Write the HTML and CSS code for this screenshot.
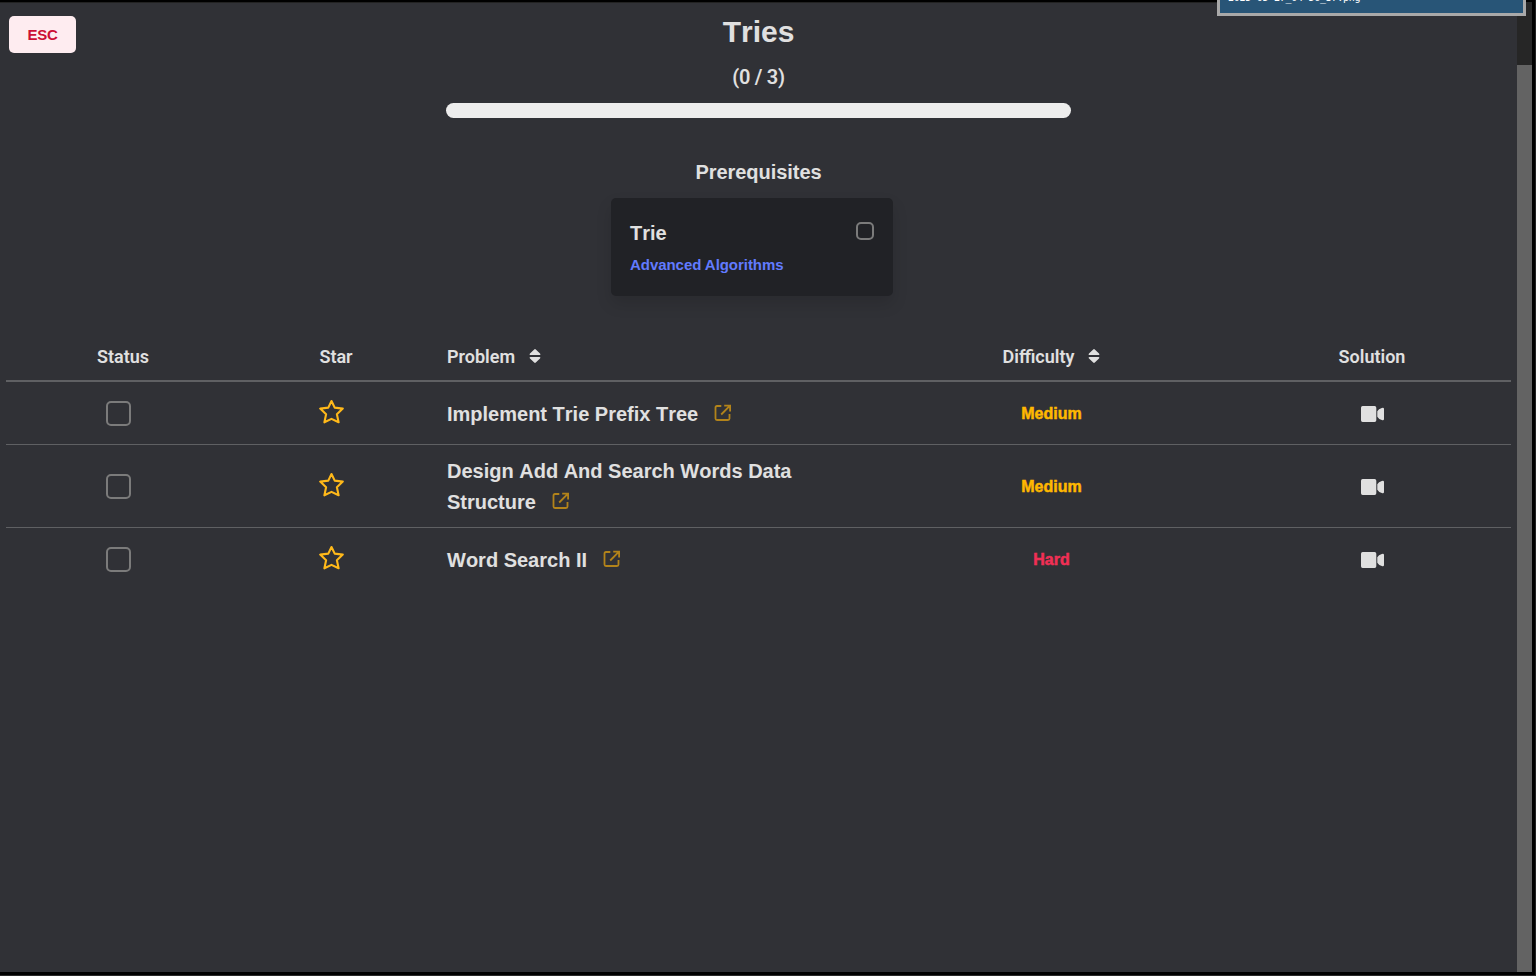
FILE: index.html
```html
<!DOCTYPE html>
<html lang="en">
<head>
<meta charset="utf-8">
<title>Tries</title>
<link rel="stylesheet" href="styles.css">
</head>
<body>
<svg class="defs" width="0" height="0" aria-hidden="true">
  <symbol id="star" viewBox="0 0 25 25"><path d="M12.5 2 L15.7 8.6 L23.8 9.6 L17.9 15.2 L19.6 23.3 L12.5 19.9 L5.4 23.3 L7.1 15.2 L1.2 9.6 L9.3 8.6 Z" fill="none" stroke="currentColor" stroke-width="2.1" stroke-linejoin="round"/></symbol>
  <symbol id="ext" viewBox="0 0 18 18"><path d="M7.3 2H3Q1.5 2 1.5 3.5V14.5Q1.5 16 3 16H14Q15.5 16 15.5 14.5V10M10.2 1.6H16.1V7.5M16 1.7L7.2 10.5" fill="none" stroke="currentColor" stroke-width="1.8"/></symbol>
  <symbol id="sort" viewBox="0 0 12 14"><path d="M5.2 .4Q6 -.3 6.8 .4L11 4.5Q12 6 10.4 6H1.6Q0 6 1 4.5ZM5.2 13.6Q6 14.3 6.8 13.6L11 9.5Q12 8 10.4 8H1.6Q0 8 1 9.5Z" fill="currentColor"/></symbol>
  <symbol id="video" viewBox="0 0 23 16"><path d="M1.6 0H13.6Q15.3 0 15.3 1.7V14.3Q15.3 16 13.6 16H1.6Q0 16 0 14.3V1.7Q0 0 1.6 0ZM16.3 5.2Q17.6 2.8 20.8 2Q23 1.3 23 3V13Q23 14.7 20.8 14Q17.6 13.2 16.3 10.8Z" fill="currentColor"/></symbol>
</svg>
<div class="screen">
  <main class="panel">
    <button class="esc">ESC</button>
    <header class="head">
      <h1 class="title">Tries</h1>
      <p class="count">(0 / 3)</p>
      <div class="progress"></div>
      <h2 class="subtitle">Prerequisites</h2>
      <section class="card">
        <div class="card-top"><span class="card-name">Trie</span><span class="check small"></span></div>
        <a class="card-link">Advanced Algorithms</a>
      </section>
    </header>
    <div class="table">
      <div class="row labels">
        <span class="cell shift">Status</span><span class="cell shift">Star</span>
        <span class="cell left"><span>Problem</span><svg class="sort"><use href="#sort"/></svg></span>
        <span class="cell"><span>Difficulty</span><svg class="sort"><use href="#sort"/></svg></span>
        <span class="cell">Solution</span>
      </div>
      <div class="row">
        <span class="cell"><span class="check"></span></span>
        <span class="cell"><svg class="star"><use href="#star"/></svg></span>
        <span class="cell left problem"><span>Implement Trie Prefix Tree<svg class="ext"><use href="#ext"/></svg></span></span>
        <span class="cell level medium">Medium</span>
        <span class="cell"><svg class="video"><use href="#video"/></svg></span>
      </div>
      <div class="row tall">
        <span class="cell"><span class="check"></span></span>
        <span class="cell"><svg class="star"><use href="#star"/></svg></span>
        <span class="cell left problem"><span>Design Add And Search Words Data Structure<svg class="ext"><use href="#ext"/></svg></span></span>
        <span class="cell level medium">Medium</span>
        <span class="cell"><svg class="video"><use href="#video"/></svg></span>
      </div>
      <div class="row last">
        <span class="cell"><span class="check"></span></span>
        <span class="cell"><svg class="star"><use href="#star"/></svg></span>
        <span class="cell left problem"><span>Word Search II<svg class="ext"><use href="#ext"/></svg></span></span>
        <span class="cell level hard">Hard</span>
        <span class="cell"><svg class="video"><use href="#video"/></svg></span>
      </div>
    </div>
  </main>
  <div class="scroll"><div class="thumb"></div></div>
  <div class="tooltip">2025-05-27_04-56_37.png</div>
</div>
</body>
</html>
```
FILE: styles.css
```css
* { box-sizing: border-box; }
body { margin: 0; background: #000; color: #e0e0e0; font-family: "Liberation Sans", Arial, sans-serif; font-weight: 700; }
.defs { position: absolute; }
.screen { position: relative; display: flex; width: 1536px; height: 976px; padding: 2px 3px 3px 0; border-right: 1px solid #222; border-bottom: 1px solid #292929; overflow: hidden; }
.panel { position: relative; width: 1517px; background: #303136; border-top: 1px solid #222; }
.scroll { width: 15px; padding-top: 63px; background: #262626; }
.thumb { height: 100%; background: #636363; }
.tooltip { position: absolute; left: 1217px; top: -14px; width: 309px; height: 30px; padding: 2px 8px; border: 3px solid #a9a9a9; background: #285577; color: #fff; font: 400 10px/14px "DejaVu Sans Mono", monospace; letter-spacing: -.27px; }
.esc { position: absolute; left: 9px; top: 13px; width: 67px; height: 37px; padding: 0; border: 0; border-radius: 5px; background: #feecf0; color: #cc0f35; font: 700 15px/37px "Liberation Sans", Arial, sans-serif; letter-spacing: -.2px; }
.head { display: flex; flex-direction: column; align-items: center; }
.title { margin: 11px 0 0; font-size: 30px; line-height: 36px; font-kerning: none; }
.count { margin: 12px 0 0; font: 600 20px/30px Roboto, sans-serif; letter-spacing: -.3px; }
.progress { width: 625px; height: 15px; margin-top: 11px; border-radius: 8px; background: #ededed; }
.subtitle { margin: 39px 0 0; font-size: 20px; line-height: 30px; letter-spacing: -.05px; }
.card { width: 282px; height: 98px; margin: 11px 13px 0 0; padding: 20px 19px; border-radius: 5px; background: #212226; box-shadow: 0 8px 16px rgba(10, 10, 10, .12); }
.card-top { display: flex; justify-content: space-between; align-items: center; height: 30px; font-size: 20px; font-kerning: none; }
.card-link { display: block; margin-top: 5px; color: #617bff; font-size: 15px; line-height: 24px; letter-spacing: -.05px; }
.check { display: block; width: 25px; height: 25px; border: 2px solid #7b7b7b; border-radius: 5px; }
.small { width: 18px; height: 18px; margin-bottom: 4px; }
.table { margin: 37px 6px 0; }
.row { display: grid; grid-template-columns: 224px 202px 438px 363px 278px; height: 63px; border-bottom: 1px solid #5f6063; }
.labels { height: 49px; border-bottom-width: 2px; font: 600 18px/27px Roboto, sans-serif; }
.tall { height: 83px; }
.last { height: 62px; border: 0; }
.cell { display: flex; align-items: center; justify-content: center; }
.shift { padding-left: 10px; }
.left { justify-content: flex-start; padding-left: 15px; }
.problem { padding: 1px 40px 0 15px; font-size: 20px; line-height: 31px; font-kerning: none; }
.problem > span { margin-top: 1px; }
.sort { width: 12px; height: 14px; margin: 0 0 1px 14px; }
.star { width: 25px; height: 25px; margin-bottom: 3px; color: #ffb91a; }
.ext { width: 18px; height: 18px; margin-left: 16px; vertical-align: -1px; color: #b2831a; }
.video { width: 23px; height: 16px; margin-top: 2px; }
.level { padding-top: 1px; font-size: 16px; -webkit-text-stroke: .5px currentColor; letter-spacing: .05px; }
.medium { color: #ffb800; }
.hard { color: #f12f55; }
```
